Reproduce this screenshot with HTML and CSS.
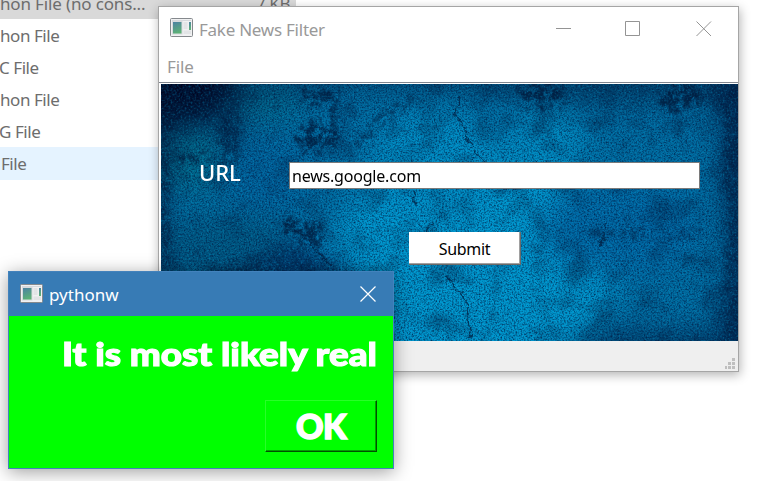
FILE: index.html
```html
<!DOCTYPE html>
<html lang="en">
<head>
<meta charset="utf-8">
<title>Fake News Filter</title>
<link rel="stylesheet" href="styles.css">
</head>
<body>
<svg width="0" height="0" class="defs" aria-hidden="true">
  <defs>
    <linearGradient id="pane" x1="0" y1="0" x2="0.3" y2="1"><stop offset="0" stop-color="#4b7fa5"/><stop offset="1" stop-color="#5db176"/></linearGradient>
    <symbol id="app" viewBox="0 0 23 19">
      <rect x=".5" y=".5" width="22" height="18" rx="1" fill="#f0f1f2" stroke="#85898d"/>
      <path d="M2 2.500h19" stroke="#d5d8dc"/>
      <rect x="2.500" y="3.500" width="9.500" height="12.500" fill="url(#pane)" stroke="#d8dadd"/>
      <rect x="13.500" y="4" width="4" height="7" fill="#e2e4e6"/>
      <rect x="13.500" y="12.500" width="7.500" height="3.500" fill="#e2e4e6"/>
      <rect x="19" y="4" width="2" height="8" fill="url(#pane)"/>
    </symbol>
  </defs>
</svg>
<ul class="files">
  <li class="picked"><span class="long">hon File (no cons...</span><span class="size">7 KB</span></li>
  <li>hon File</li>
  <li class="tucked">C File</li>
  <li>hon File</li>
  <li class="tucked">G File</li>
  <li class="hover"><span class="indent">File</span></li>
</ul>

<section class="window main">
  <header class="bar">
    <svg class="app-icon" width="23" height="19"><use href="#app"/></svg>
    <h1>Fake News Filter</h1>
    <svg class="controls" width="156" height="16" viewBox="0 0 156 16" fill="none" stroke="#949494">
      <path d="M0 7.500h15M69.500.500h14v14h-14z"/><path d="M140.500.500l14.500 14.500M155 .500l-14.500 14.500"/>
    </svg>
  </header>
  <nav class="menu">File</nav>
  <form class="canvas">
    <svg class="texture" width="577" height="257" viewBox="0 0 577 257" aria-hidden="true" color-interpolation-filters="sRGB">
      <defs>
        <filter id="soft" x="-50%" y="-50%" width="200%" height="200%"><feGaussianBlur stdDeviation="15"/></filter>
        <filter id="cloud" x="-30%" y="-30%" width="160%" height="160%"><feTurbulence type="fractalNoise" baseFrequency=".13" numOctaves="4" seed="4" result="n"/><feDisplacementMap in="SourceGraphic" in2="n" scale="30" xChannelSelector="R" yChannelSelector="G" result="d"/><feGaussianBlur in="d" stdDeviation="1.800" result="b"/><feColorMatrix in="n" values="0 0 0 0 0  0 0 0 0 0  0 0 0 0 0  5 0 0 0 -1.800" result="m"/><feComposite in="b" in2="m" operator="in"/></filter>
        <filter id="rough" x="-20%" y="-20%" width="140%" height="140%"><feTurbulence type="fractalNoise" baseFrequency=".15" numOctaves="3" seed="4" result="n"/><feDisplacementMap in="SourceGraphic" in2="n" scale="9" xChannelSelector="R" yChannelSelector="G"/><feGaussianBlur stdDeviation=".5"/></filter>
        <filter id="grain" x="0" y="0" width="100%" height="100%"><feTurbulence type="fractalNoise" baseFrequency=".6" numOctaves="3" seed="8"/><feColorMatrix values="0 0 0 0 0  0 0 0 0 .1  0 0 0 0 .26  1.600 0 0 0 -.640"/></filter>
        <filter id="glint" x="0" y="0" width="100%" height="100%"><feTurbulence type="fractalNoise" baseFrequency=".5" numOctaves="3" seed="22"/><feColorMatrix values="0 0 0 0 .02  0 0 0 0 .62  0 0 0 0 .82  1.600 0 0 0 -.700"/></filter>
        <filter id="patch" x="0" y="0" width="100%" height="100%"><feTurbulence type="fractalNoise" baseFrequency=".035" numOctaves="6" seed="13"/><feColorMatrix values="0 0 0 0 0  0 0 0 0 .07  0 0 0 0 .2  3 0 0 0 -1.450"/></filter>
      </defs>
      <rect width="577" height="257" fill="#006da2"/>
      <g filter="url(#soft)">
        <ellipse cx="310" cy="185" rx="145" ry="110" fill="#0098cf"/>
        <ellipse cx="275" cy="80" rx="65" ry="55" fill="#008ec5"/>
        <ellipse cx="385" cy="60" rx="42" ry="38" fill="#008ac0"/>
        <path d="M-30-30H620V18H390L340 8 220 2 120 5 80 55 20 65-30 90z" fill="#003a63"/>
        <path d="M-35-35H85L75 20 15 35-35 60z" fill="#00001a"/>
        <ellipse cx="105" cy="20" rx="40" ry="18" fill="#006488"/>
        <ellipse cx="35" cy="78" rx="38" ry="30" fill="#006b8b"/>
        <ellipse cx="105" cy="90" rx="48" ry="38" fill="#00629b"/>
        <ellipse cx="65" cy="165" rx="75" ry="35" fill="#005882"/>
        <path d="M45 220L130 160 195 190V280H30z" fill="#003c72"/>
        <ellipse cx="460" cy="145" rx="80" ry="45" fill="#0069a5"/>
        <path d="M562-20H610V280H555L572 190 566 110z" fill="#001d43"/>
        <path d="M430 250H610V285H390z" fill="#00315b"/>
        <path d="M-25 0H-2V270H-25z" fill="#00122f"/>
      </g>
      <rect width="577" height="257" filter="url(#patch)" opacity=".35"/>
      <g filter="url(#cloud)" fill="#001433" opacity=".72">
        <path d="M0 0H72L60 23 48 32 18 35 12 50H0z"/>
        <ellipse cx="154" cy="54" rx="20" ry="15"/>
        <path d="M172 5h7v55h-7z"/>
        <path d="M55 25h25v50H60zM40 69h40v9H40z" opacity=".6"/>
        <ellipse cx="160" cy="12" rx="18" ry="9"/>
        <path d="M190 70L225 22 270 10 225 38 207 61z" opacity=".6"/>
        <path d="M119 132l36 6 14 17-15 9-30-18z"/>
        <path d="M60 180l70-20 60 20v40H60z" opacity=".4"/>
        <ellipse cx="30" cy="75" rx="14" ry="4"/>
        <ellipse cx="383" cy="12" rx="24" ry="12"/>
        <ellipse cx="522" cy="14" rx="22" ry="15"/>
        <path d="M430 145h115v9H430zM515 170h32v12h-32z" opacity=".5"/>
        <ellipse cx="405" cy="88" rx="12" ry="5"/>
        <path d="M566 5h12v250h-12z" opacity=".6"/>
        <path d="M3 55h7v105H3z" opacity=".8"/>
      </g>
      <g fill="none" stroke="#001e3f" stroke-width="1.500" opacity=".75" filter="url(#rough)">
        <path d="M293 31l10 8 2 15 12 18 18 13M293 31l6-18M252 105l3 17M273 139l-14 14M285 192l12 14 9 12 1 17 4 12M123 138l23 18 23 25M441 159l4-20"/>
        <path d="M310 249v4M439 162l2-5" stroke-width="4"/>
      </g>
      <rect width="577" height="257" filter="url(#glint)" opacity=".6"/>
      <rect width="577" height="257" filter="url(#grain)"/>
    </svg>
    <label for="url">URL</label>
    <input id="url" type="text" value="news.google.com">
    <button class="submit" type="button">Submit</button>
  </form>
  <footer class="status">
    <svg width="10" height="11" fill="#bfbfbf" shape-rendering="crispEdges"><path d="M7 0h3v3H7zM3 4h3v3H3zM7 4h3v3H7zM0 8h2v3H0zM3 8h3v3H3zM7 8h3v3H7z"/></svg>
  </footer>
</section>

<section class="window dialog">
  <header class="bar">
    <svg class="app-icon" width="23" height="19"><use href="#app"/></svg>
    <h2>pythonw</h2>
    <svg class="close" width="16" height="16" stroke="#fff" stroke-width="1.200"><path d="M.5.5l15 15M15.500.500l-15 15"/></svg>
  </header>
  <div class="result">
    <p>It is most likely real</p>
    <button class="ok" type="button">OK</button>
  </div>
</section>
</body>
</html>
```
FILE: styles.css
```css
* { box-sizing: border-box; }
body { margin: 0; width: 760px; height: 481px; overflow: hidden; position: relative; background: #fff; font-family: "Noto Sans", sans-serif; }
.defs { position: absolute; }
h1, h2, p, ul { margin: 0; padding: 0; }
svg { display: block; flex: none; }

.files { list-style: none; width: 296px; margin-top: -13px; color: #6d6d6d; font-size: 17px; letter-spacing: -.45px; }
.files li { height: 32px; line-height: 33px; white-space: pre; }
.files .picked { display: flex; justify-content: space-between; background: #d9d9d9; padding-right: 6px; }
.files .long { letter-spacing: -.15px; }
.files .tucked { text-indent: -1px; }
.files .hover { height: 33px; background: #e5f3ff; }
.indent { padding-left: 1px; }

.window { position: absolute; }
.bar { display: flex; align-items: center; }
.bar h1, .bar h2 { font-weight: 400; }
.main { left: 158px; top: 6px; width: 581px; height: 366px; border: 1px solid #a5a5a5; background: #fff; box-shadow: 1px 3px 10px rgba(0,0,0,.3); }
.main .bar { height: 44px; padding: 0 26px 0 11px; }
.main .app-icon { margin-top: -3px; }
.main h1 { margin-left: 6px; color: #999; font-size: 17px; letter-spacing: -.25px; }
.controls { margin-left: auto; }
.menu { height: 32px; padding-left: 8px; border-bottom: 1px solid #828790; line-height: 31px; font-size: 17px; letter-spacing: -.1px; color: #999; }
.canvas { position: relative; display: grid; grid-template-columns: 90px 411px; grid-template-rows: 27px 33px; row-gap: 43px; width: 577px; height: 257px; margin: 1px 0 0 2px; padding: 78px 0 0 38px; background: #006da2; }
.texture { position: absolute; inset: 0; }
label, input, .submit { position: relative; }
label { color: #fff; font: 500 22px/20px "Noto Sans", sans-serif; letter-spacing: -.1px; }
input { width: 411px; height: 27px; border: 1px solid #7a7a7a; padding: 0 2px; border-radius: 0; background: #fff; color: #000; font: 16px "Noto Sans", sans-serif; letter-spacing: -.2px; }
.submit { grid-column: 2; width: 112px; height: 33px; margin-left: 120px; padding: 2px 0 0; border: 0; border-right: 1px solid #696969; border-bottom: 1px solid #696969; box-shadow: inset -1px -1px #a0a0a0; background: #fff; color: #000; font: 16px "Noto Sans", sans-serif; letter-spacing: -.35px; }
.status { height: 30px; display: flex; justify-content: flex-end; align-items: flex-end; padding: 0 3px 2px 0; background: #efefef; }

.dialog { left: 8px; top: 271px; width: 386px; height: 198px; border: 1px solid #4382bc; background: #0f0; box-shadow: 0 3px 17px rgba(0,0,0,.38); }
.dialog .bar { height: 44px; padding: 0 17px 0 11px; background: #377bb5; color: #fff; }
.dialog .app-icon { margin-top: -2px; }
.dialog h2 { margin-left: 6px; font-size: 17px; letter-spacing: 0; }
.close { margin-left: auto; }
.result { display: flex; flex-direction: column; align-items: flex-end; padding: 16px 16px; color: #fff; font: 900 32px/43px Lato, sans-serif; }
.result p { white-space: nowrap; transform: scaleX(1.15); transform-origin: right; -webkit-text-stroke: 1.1px #fff; }
.ok { width: 112px; height: 52px; margin-top: 25px; padding: 0; border: 1px solid; border-color: #28ff28 #005000 #005000 #28ff28; box-shadow: inset -1px -1px #00a000; background: #0f0; color: #fff; font: 900 34px/50px Lato, sans-serif; letter-spacing: -.6px; -webkit-text-stroke: 1.5px #fff; }
```
